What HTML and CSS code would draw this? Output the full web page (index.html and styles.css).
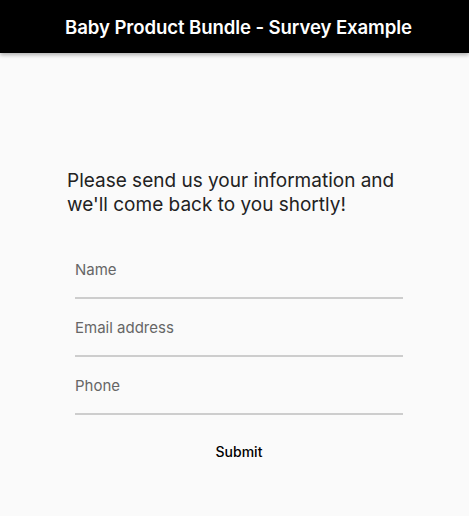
FILE: index.html
```html
<!DOCTYPE html>
<html>
<head>
<meta charset="utf-8">
<link rel="stylesheet" href="styles.css">
</head>
<body>
<header class="appbar"><h1 class="title">Baby Product Bundle - Survey Example</h1></header>
<main class="content">
  <p class="intro">Please send us your information and we'll come back to you shortly!</p>
  <form class="form">
    <label class="field"><input class="input" type="text" placeholder="Name"></label>
    <label class="field"><input class="input" type="text" placeholder="Email address"></label>
    <label class="field"><input class="input" type="text" placeholder="Phone"></label>
    <div class="actions"><button class="submit" type="button">Submit</button></div>
  </form>
</main>
</body>
</html>
```
FILE: styles.css
```css
html, body { margin: 0; padding: 0; }
body { background: #fafafa; font-family: Inter, Roboto, sans-serif; height: 516px; overflow: hidden; }
.appbar { height: 53px; background: #000; display: flex; align-items: center; justify-content: center; padding-left: 8px; box-shadow: 0 2px 4px rgba(0,0,0,0.3); position: relative; }
.title { margin: 0; color: #fff; font-size: 18.6px; font-weight: 600; letter-spacing: -0.1px; }
.content { padding: 116px 50px 0 67px; }
.intro { margin: 0; font-family: Inter, sans-serif; font-size: 19px; line-height: 24px; color: #222; width: 340px; }
.form { margin-top: 36px; padding: 0 0 0 8px; width: 328px; }
.field { display: block; height: 58px; }
.input { box-sizing: border-box; width: 100%; height: 46px; border: 0; border-bottom: 2px solid #cdcdcd; background: transparent; font-family: Inter, sans-serif; font-size: 15px; padding: 0 0 12px; outline: none; color: #222; }
.input::placeholder { color: #666; }
.actions { display: flex; justify-content: center; margin-top: 8px; }
.submit { background: none; border: 0; font-family: Inter, sans-serif; font-size: 14px; font-weight: 500; color: #000; padding: 8px 16px; }
```
